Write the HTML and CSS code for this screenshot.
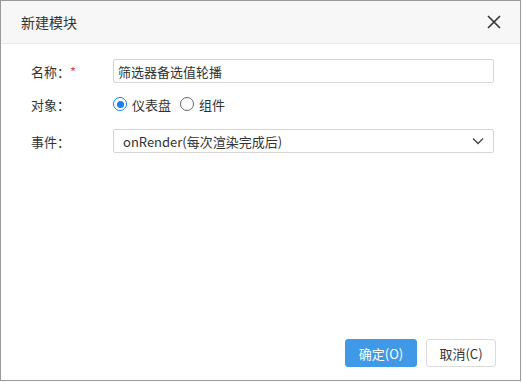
FILE: index.html
```html
<!DOCTYPE html>
<html lang="zh">
<head>
<meta charset="utf-8">
<link rel="stylesheet" href="styles.css">
</head>
<body>
<div class="dialog">
  <div class="header">
    <span class="title">新建模块</span>
    <svg class="close" width="14" height="14" viewBox="0 0 14 14"><path d="M1 1L13 13M13 1L1 13" stroke="#333" stroke-width="1.6" fill="none"/></svg>
  </div>
  <div class="body">
    <div class="row">
      <div class="label">名称：<span class="star">*</span></div>
      <div class="input">筛选器备选值轮播</div>
    </div>
    <div class="row row-radio">
      <div class="label">对象：</div>
      <div class="radios">
        <span class="radio checked"></span><span class="rtext">仪表盘</span>
        <span class="radio"></span><span class="rtext">组件</span>
      </div>
    </div>
    <div class="row row-select">
      <div class="label">事件：</div>
      <div class="select">
        <span>onRender(每次渲染完成后)</span>
        <svg width="12" height="8" viewBox="0 0 12 8"><path d="M1 1.5L6 6.5L11 1.5" stroke="#444" stroke-width="1.3" fill="none"/></svg>
      </div>
    </div>
  </div>
  <div class="footer">
    <div class="btn primary">确定(O)</div>
    <div class="btn">取消(C)</div>
  </div>
</div>
</body>
</html>
```
FILE: styles.css
```css
html, body { margin: 0; padding: 0; background: #fff; }
body { font-family: "Noto Sans CJK SC", "Liberation Sans", sans-serif; color: #333; }
.dialog {
  width: 519px; height: 379px; border: 1px solid #9a9a9a;
  display: flex; flex-direction: column; background: #fff;
}
.header {
  height: 42px; background: #f7f7f7; border-bottom: 1px solid #e6e6e6;
  display: flex; align-items: center; justify-content: space-between;
  padding: 0 19px 0 20px; flex: none;
}
.title { font-size: 14px; color: #333; }
.close { display: block; }
.body { flex: 1; padding: 15px 26px 0 30px; display: flex; flex-direction: column; }
.row { display: flex; align-items: center; height: 24px; font-size: 13px; }
.row-radio { margin-top: 9px; }
.row-select { margin-top: 13px; }
.label { width: 82px; color: #333; flex: none; }
.star { color: #e54545; }
.input {
  flex: 1; height: 22px; border: 1px solid #d6d6d6; border-radius: 2px;
  display: flex; align-items: center; padding-left: 4px;
}
.radios { display: flex; align-items: center; }
.radio {
  width: 12px; height: 12px; border: 1px solid #666; border-radius: 50%;
  display: inline-block; position: relative; margin-right: 5px; flex: none;
}
.radio.checked { border-color: #1b7ff0; }
.radio.checked::after {
  content: ""; position: absolute; left: 2.5px; top: 2.5px; width: 7px; height: 7px;
  border-radius: 50%; background: #1b7ff0;
}
.rtext { margin-right: 9px; }
.select {
  flex: 1; height: 22px; border: 1px solid #d6d6d6; border-radius: 2px;
  display: flex; align-items: center; justify-content: space-between;
  padding: 0 9px 0 9px;
}
.footer { display: flex; justify-content: flex-end; gap: 9px; padding: 0 24px 13px 0; }
.btn {
  width: 68px; height: 26px; border: 1px solid #dcdcdc; border-radius: 3px;
  display: flex; align-items: center; justify-content: center; font-size: 13px; color: #333;
}
.btn.primary { background: #3f99e6; border-color: #3f99e6; color: #fff; width: 70px; }
```
